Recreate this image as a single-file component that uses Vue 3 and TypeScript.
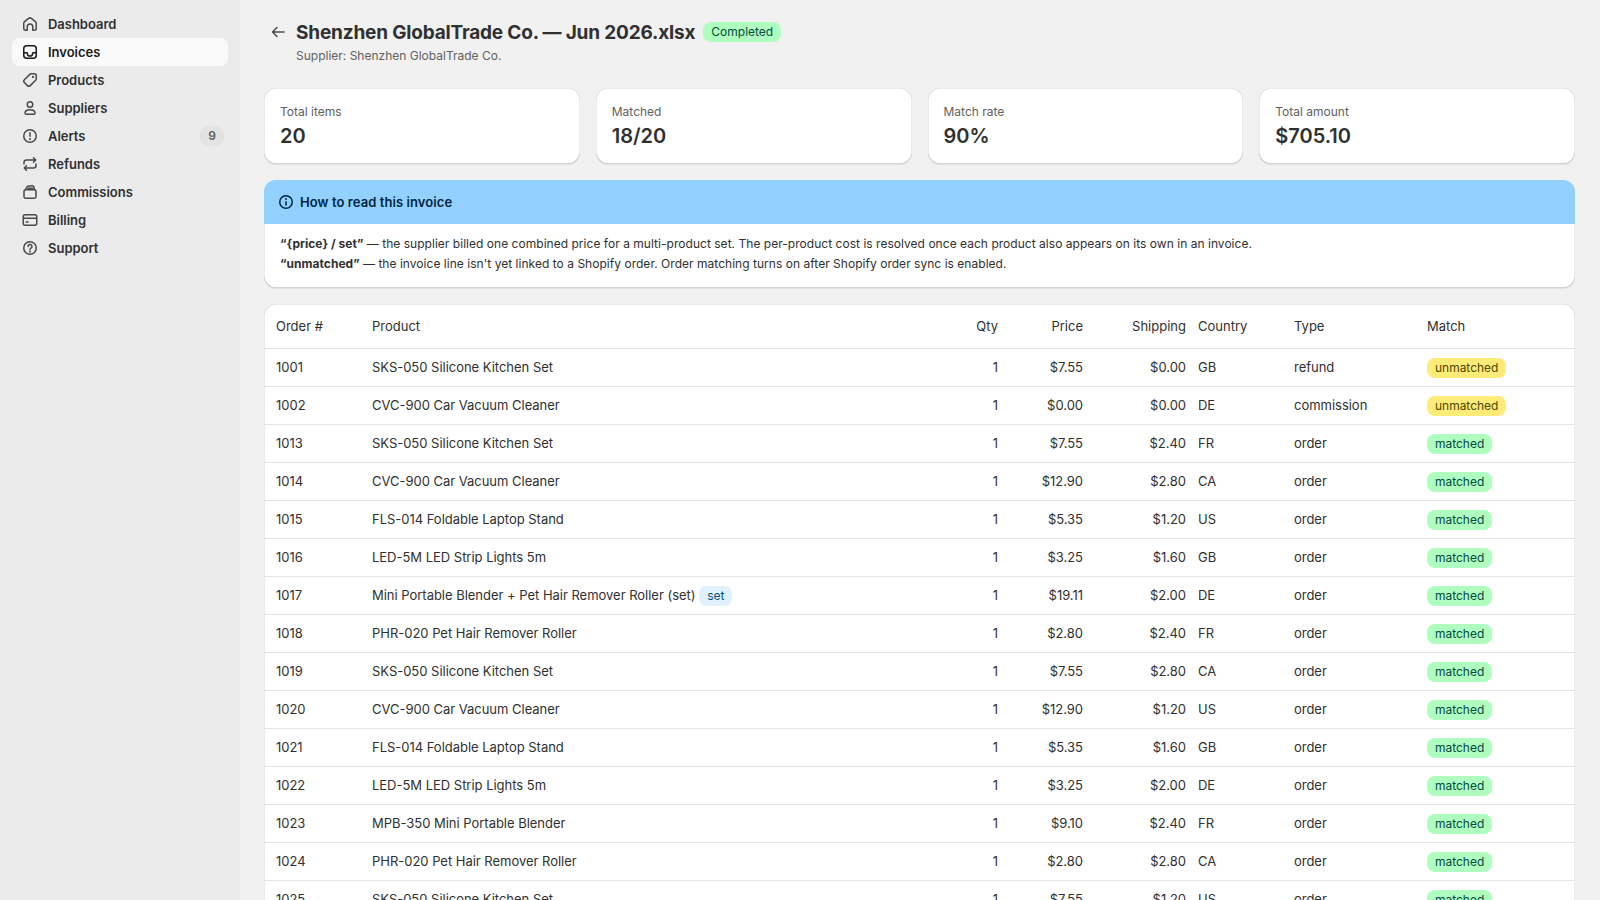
<script setup lang="ts">
interface NavItem {
  label: string;
  icon: string;
  count?: number;
}

interface Row {
  order: number;
  product: string;
  isSet?: boolean;
  qty: number;
  price: string;
  shipping: string;
  country: string;
  type: string;
  match: 'matched' | 'unmatched';
}

const nav: NavItem[] = [
  { label: 'Dashboard', icon: 'home' },
  { label: 'Invoices', icon: 'inbox' },
  { label: 'Products', icon: 'tag' },
  { label: 'Suppliers', icon: 'person' },
  { label: 'Alerts', icon: 'alert', count: 9 },
  { label: 'Refunds', icon: 'refresh' },
  { label: 'Commissions', icon: 'wallet' },
  { label: 'Billing', icon: 'card' },
  { label: 'Support', icon: 'question' },
];

const stats = [
  { label: 'Total items', value: '20' },
  { label: 'Matched', value: '18/20' },
  { label: 'Match rate', value: '90%' },
  { label: 'Total amount', value: '$705.10' },
];

const row = (
  order: number,
  product: string,
  price: string,
  shipping: string,
  country: string,
  type = 'order',
  match: Row['match'] = 'matched',
  isSet = false,
): Row => ({ order, product, price, shipping, country, type, match, isSet, qty: 1 });

const rows: Row[] = [
  row(1001, 'SKS-050 Silicone Kitchen Set', '$7.55', '$0.00', 'GB', 'refund', 'unmatched'),
  row(1002, 'CVC-900 Car Vacuum Cleaner', '$0.00', '$0.00', 'DE', 'commission', 'unmatched'),
  row(1013, 'SKS-050 Silicone Kitchen Set', '$7.55', '$2.40', 'FR'),
  row(1014, 'CVC-900 Car Vacuum Cleaner', '$12.90', '$2.80', 'CA'),
  row(1015, 'FLS-014 Foldable Laptop Stand', '$5.35', '$1.20', 'US'),
  row(1016, 'LED-5M LED Strip Lights 5m', '$3.25', '$1.60', 'GB'),
  row(1017, 'Mini Portable Blender + Pet Hair Remover Roller (set)', '$19.11', '$2.00', 'DE', 'order', 'matched', true),
  row(1018, 'PHR-020 Pet Hair Remover Roller', '$2.80', '$2.40', 'FR'),
  row(1019, 'SKS-050 Silicone Kitchen Set', '$7.55', '$2.80', 'CA'),
  row(1020, 'CVC-900 Car Vacuum Cleaner', '$12.90', '$1.20', 'US'),
  row(1021, 'FLS-014 Foldable Laptop Stand', '$5.35', '$1.60', 'GB'),
  row(1022, 'LED-5M LED Strip Lights 5m', '$3.25', '$2.00', 'DE'),
  row(1023, 'MPB-350 Mini Portable Blender', '$9.10', '$2.40', 'FR'),
  row(1024, 'PHR-020 Pet Hair Remover Roller', '$2.80', '$2.80', 'CA'),
  row(1025, 'SKS-050 Silicone Kitchen Set', '$7.55', '$1.20', 'US'),
];
</script>

<template>
  <div class="shell">
    <aside class="sidebar">
      <a
        v-for="item in nav"
        :key="item.label"
        class="nav-item"
        :class="{ active: item.label === 'Invoices' }"
      >
        <svg class="nav-icon" viewBox="0 0 20 20" fill="none" stroke="currentColor" stroke-width="1.5" stroke-linecap="round" stroke-linejoin="round">
          <template v-if="item.icon === 'home'">
            <path d="M3.75 9.3c0-.7.3-1.3.8-1.7l4.1-3.2a2.2 2.2 0 0 1 2.7 0l4.1 3.2c.5.4.8 1 .8 1.7v4.9a2 2 0 0 1-2 2h-1.5v-3.4a2.75 2.75 0 0 0-5.5 0v3.4H5.75a2 2 0 0 1-2-2z" />
          </template>
          <template v-else-if="item.icon === 'inbox'">
            <rect x="3.75" y="3.75" width="12.5" height="12.5" rx="3" />
            <path d="M4 10.75h2.6a.8.8 0 0 1 .8.7 2.6 2.6 0 0 0 5.2 0 .8.8 0 0 1 .8-.7H16" />
          </template>
          <template v-else-if="item.icon === 'tag'">
            <path d="M11.2 3.75h3.05a2 2 0 0 1 2 2V8.8a2 2 0 0 1-.6 1.4l-5.4 5.4a2 2 0 0 1-2.8 0L4.4 12.55a2 2 0 0 1 0-2.8l5.4-5.4a2 2 0 0 1 1.4-.6z" />
            <circle cx="13" cy="7" r=".4" />
          </template>
          <template v-else-if="item.icon === 'person'">
            <circle cx="10" cy="6.5" r="2.75" />
            <path d="M5 15c0-2 2-3.25 5-3.25S15 13 15 15c0 .7-.5 1.25-1.25 1.25h-7.5C5.5 16.25 5 15.7 5 15z" />
          </template>
          <template v-else-if="item.icon === 'alert'">
            <circle cx="10" cy="10" r="6.25" />
            <path d="M10 6.75v3.5" />
            <circle cx="10" cy="13.1" r=".35" />
          </template>
          <template v-else-if="item.icon === 'refresh'">
            <path d="M4 10V8.5a2.5 2.5 0 0 1 2.5-2.5H15.5M13.5 3.75 15.75 6l-2.25 2.25" />
            <path d="M16 10v1.5a2.5 2.5 0 0 1-2.5 2.5H4.5M6.5 11.75 4.25 14l2.25 2.25" />
          </template>
          <template v-else-if="item.icon === 'wallet'">
            <path d="M4 9.5a1.75 1.75 0 0 1 1.75-1.75h8.5A1.75 1.75 0 0 1 16 9.5v5a1.75 1.75 0 0 1-1.75 1.75h-8.5A1.75 1.75 0 0 1 4 14.5z" />
            <path d="M5.5 7.5 6.8 5a1.5 1.5 0 0 1 1.1-.8l4.3-.5a1.5 1.5 0 0 1 1.6 1l.7 2.8M8 6.25h4.5" />
          </template>
          <template v-else-if="item.icon === 'card'">
            <rect x="3.25" y="4.75" width="13.5" height="10.5" rx="2" />
            <path d="M3.5 8.25h13M6.25 12h1.75" />
          </template>
          <template v-else>
            <circle cx="10" cy="10" r="6.25" />
            <path d="M8.1 8.4a1.95 1.95 0 1 1 2.9 1.7c-.6.35-1 .7-1 1.3v.1" />
            <circle cx="10" cy="13.6" r=".35" />
          </template>
        </svg>
        <span class="nav-label">{{ item.label }}</span>
        <span v-if="item.count" class="nav-count">{{ item.count }}</span>
      </a>
    </aside>

    <main class="main">
      <header class="page-header">
        <svg class="back" viewBox="0 0 20 20" fill="none" stroke="currentColor" stroke-width="1.5" stroke-linecap="round" stroke-linejoin="round">
          <path d="M16 10H4.5M9 5.5 4.5 10 9 14.5" />
        </svg>
        <div>
          <div class="title-row">
            <h1 class="title">Shenzhen GlobalTrade Co. — Jun 2026.xlsx</h1>
            <span class="badge green">Completed</span>
          </div>
          <p class="subtitle">Supplier: Shenzhen GlobalTrade Co.</p>
        </div>
      </header>

      <section class="stats">
        <div v-for="s in stats" :key="s.label" class="card stat">
          <div class="stat-label">{{ s.label }}</div>
          <div class="stat-value">{{ s.value }}</div>
        </div>
      </section>

      <section class="card info">
        <div class="info-head">
          <svg class="info-icon" viewBox="0 0 20 20" fill="none" stroke="currentColor" stroke-width="1.5" stroke-linecap="round">
            <circle cx="10" cy="10" r="6.25" />
            <path d="M10 9.75v3.25" />
            <circle cx="10" cy="7" r=".35" />
          </svg>
          <span>How to read this invoice</span>
        </div>
        <div class="info-body">
          <p><strong>“{price} / set”</strong> — the supplier billed one combined price for a multi-product set. The per-product cost is resolved once each product also appears on its own in an invoice.</p>
          <p><strong>“unmatched”</strong> — the invoice line isn't yet linked to a Shopify order. Order matching turns on after Shopify order sync is enabled.</p>
        </div>
      </section>

      <section class="card table-card">
        <table class="items">
          <colgroup>
            <col class="c-order" />
            <col />
            <col class="c-qty" />
            <col class="c-price" />
            <col class="c-ship" />
            <col class="c-country" />
            <col class="c-type" />
            <col class="c-match" />
          </colgroup>
          <thead>
            <tr>
              <th>Order #</th>
              <th>Product</th>
              <th class="num">Qty</th>
              <th class="num">Price</th>
              <th class="num">Shipping</th>
              <th>Country</th>
              <th>Type</th>
              <th>Match</th>
            </tr>
          </thead>
          <tbody>
            <tr v-for="r in rows" :key="r.order">
              <td>{{ r.order }}</td>
              <td>
                {{ r.product }}
                <span v-if="r.isSet" class="badge blue set">set</span>
              </td>
              <td class="num">{{ r.qty }}</td>
              <td class="num">{{ r.price }}</td>
              <td class="num">{{ r.shipping }}</td>
              <td>{{ r.country }}</td>
              <td>{{ r.type }}</td>
              <td>
                <span class="badge" :class="r.match === 'matched' ? 'green' : 'yellow'">{{ r.match }}</span>
              </td>
            </tr>
          </tbody>
        </table>
      </section>
    </main>
  </div>
</template>

<style>
html,
body {
  margin: 0;
  height: 100%;
  overflow: hidden;
}
</style>

<style scoped>
.shell {
  display: flex;
  height: 100vh;
  overflow: hidden;
  background: #f1f1f1;
  color: #303030;
  font-family: Inter, "Liberation Sans", sans-serif;
  font-size: 13px;
  line-height: 20px;
}

.sidebar {
  width: 240px;
  flex: none;
  box-sizing: border-box;
  padding: 10px 12px;
  background: #ebebeb;
}

.nav-item {
  display: flex;
  align-items: center;
  height: 28px;
  padding: 0 4px 0 8px;
  gap: 8px;
  border-radius: 8px;
  font-weight: 600;
  letter-spacing: -0.02px;
  color: #303030;
}

.nav-item.active {
  background: #fafafa;
  color: #1a1a1a;
}

.nav-icon {
  width: 20px;
  height: 20px;
  flex: none;
  color: #4a4a4a;
}

.nav-item.active .nav-icon {
  color: #1a1a1a;
}

.nav-label {
  flex: 1;
}

.nav-count {
  width: 24px;
  height: 20px;
  border-radius: 8px;
  background: #e3e3e3;
  color: #616161;
  font-size: 12px;
  text-align: center;
}

.main {
  flex: 1;
  min-width: 0;
  box-sizing: border-box;
  padding: 20px 25px 0 24px;
}

.page-header {
  display: flex;
  align-items: flex-start;
  gap: 8px;
  height: 48px;
  margin-bottom: 20px;
}

.back {
  width: 20px;
  height: 20px;
  margin: 2px 0 0 4px;
  flex: none;
  color: #4a4a4a;
}

.title-row {
  display: flex;
  align-items: center;
  gap: 8px;
  height: 24px;
}

.title {
  margin: 0;
  padding-top: 1px;
  font-size: 19px;
  line-height: 24px;
  font-weight: 650;
  letter-spacing: -0.18px;
}

.subtitle {
  margin: 2px 0 0;
  font-size: 12px;
  line-height: 20px;
  color: #616161;
}

.badge {
  display: inline-block;
  height: 20px;
  padding: 0 8px;
  border-radius: 8px;
  font-size: 12px;
  line-height: 20px;
  font-weight: 430;
  vertical-align: middle;
}

.badge.set {
  vertical-align: baseline;
}

.green {
  background: #affebf;
  color: #014b40;
}

.yellow {
  background: #ffeb78;
  color: #4f4700;
}

.blue {
  background: #e0f0ff;
  color: #00527c;
}

.card {
  background: #fff;
  border-radius: 12px;
  box-shadow: 0 1px 0 0 rgba(26, 26, 26, 0.07), 0 1px 0 0 rgba(0, 0, 0, 0.08) inset, 1px 0 0 0 rgba(0, 0, 0, 0.08) inset, -1px 0 0 0 rgba(0, 0, 0, 0.08) inset, 0 -1px 0 0 rgba(0, 0, 0, 0.17) inset;
  overflow: hidden;
}

.stats {
  display: grid;
  grid-template-columns: repeat(4, 1fr);
  gap: 16px;
  margin-bottom: 16px;
}

.stat {
  height: 76px;
  box-sizing: border-box;
  padding: 14px 16px;
}

.stat-label {
  font-size: 12px;
  line-height: 20px;
  color: #616161;
  margin-bottom: 2px;
}

.stat-value {
  font-size: 20px;
  line-height: 24px;
  font-weight: 600;
}

.info {
  margin-bottom: 16px;
}

.info-head {
  display: flex;
  align-items: center;
  gap: 4px;
  height: 44px;
  padding: 0 12px;
  background: #91d0ff;
  color: #00263f;
  font-weight: 600;
  letter-spacing: 0.08px;
}

.info-icon {
  width: 20px;
  height: 20px;
  flex: none;
}

.info-body {
  padding: 10px 16px 14px;
  font-size: 12px;
  letter-spacing: 0.03px;
}

.info-body p {
  margin: 0;
}

.info-body strong {
  font-weight: 650;
}

.items {
  width: 100%;
  table-layout: fixed;
  border-collapse: collapse;
}

.c-order {
  width: 102px;
}

.c-qty {
  width: 60px;
}

.c-price {
  width: 85px;
}

.c-ship {
  width: 103px;
}

.c-country {
  width: 96px;
}

.c-type {
  width: 133px;
}

.c-match {
  width: 154px;
}

.items th,
.items td {
  padding: 0 6px;
  text-align: left;
  font-weight: 400;
  white-space: nowrap;
  border-bottom: 1px solid #e3e3e3;
  box-sizing: border-box;
}

.items th {
  height: 44px;
}

.items td {
  height: 38px;
  letter-spacing: -0.02px;
}

.items th:first-child,
.items td:first-child {
  padding-left: 12px;
}

.items .num {
  text-align: right;
}
</style>
